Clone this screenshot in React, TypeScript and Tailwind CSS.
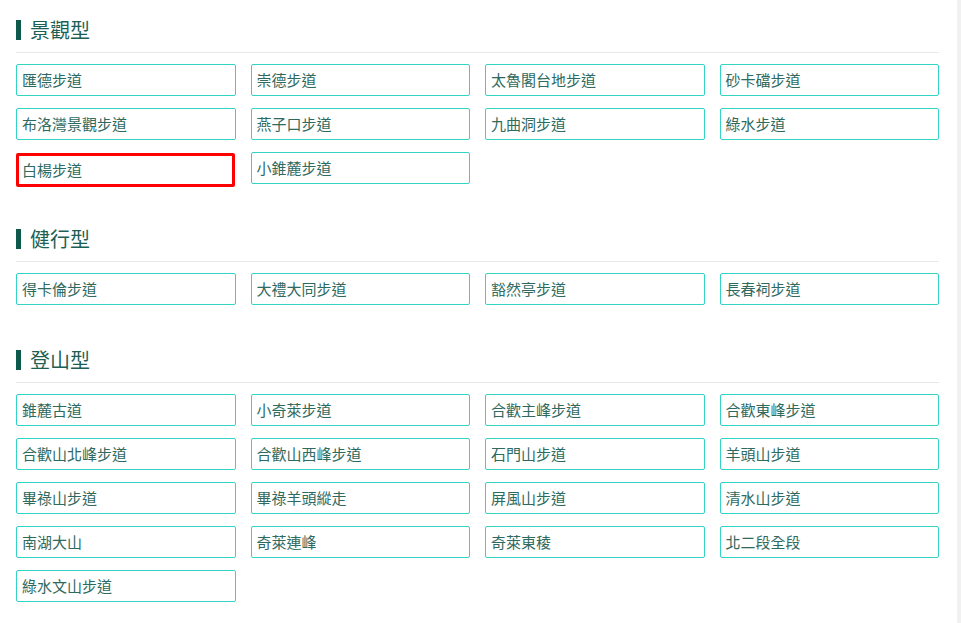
import React from "react";

type Section = { title: string; items: string[] };

const sections: Section[] = [
  {
    title: "景觀型",
    items: ["匯德步道", "崇德步道", "太魯閣台地步道", "砂卡礑步道", "布洛灣景觀步道", "燕子口步道", "九曲洞步道", "綠水步道", "白楊步道", "小錐麓步道"],
  },
  {
    title: "健行型",
    items: ["得卡倫步道", "大禮大同步道", "豁然亭步道", "長春祠步道"],
  },
  {
    title: "登山型",
    items: [
      "錐麓古道",
      "小奇萊步道",
      "合歡主峰步道",
      "合歡東峰步道",
      "合歡山北峰步道",
      "合歡山西峰步道",
      "石門山步道",
      "羊頭山步道",
      "畢祿山步道",
      "畢祿羊頭縱走",
      "屏風山步道",
      "清水山步道",
      "南湖大山",
      "奇萊連峰",
      "奇萊東稜",
      "北二段全段",
      "綠水文山步道",
    ],
  },
];

export default function App() {
  return (
    <div
      className="flex w-[961px] h-[623px] overflow-hidden bg-white"
      style={{ fontFamily: '"Noto Sans CJK TC", "Noto Sans", sans-serif' }}
    >
      <div className="flex-1 pl-4 pr-[18px] pt-[20px] flex flex-col gap-[45px]">
        {sections.map((s) => (
          <section key={s.title}>
            <div className="flex items-center pb-3 border-b border-[#e8e8e8]">
              <span className="w-[5px] h-[20px] bg-[#0d5a4d]" />
              <h2 className="ml-[9px] text-[20px] leading-[20px] text-[#1d5f55]">{s.title}</h2>
            </div>
            <div className="mt-[11px] grid grid-cols-4 gap-x-[15px] gap-y-[12px] items-start">
              {s.items.map((it) =>
                it === "白楊步道" ? (
                  <div
                    key={it}
                    className="mt-[1px] mb-[-3px] h-[34px] mr-[1px] border-[3px] border-[#ff0000] rounded-[2px] pl-[3px] flex items-center text-[15px] text-[#2f6a60]"
                  >
                    {it}
                  </div>
                ) : (
                  <div
                    key={it}
                    className="h-[32px] border border-[#33d4c6] rounded-[2px] pl-[5px] flex items-center text-[15px] text-[#2f6a60]"
                  >
                    {it}
                  </div>
                )
              )}
            </div>
          </section>
        ))}
      </div>
      <div className="w-[4px] h-full bg-[#f1f1f1]" />
    </div>
  );
}
